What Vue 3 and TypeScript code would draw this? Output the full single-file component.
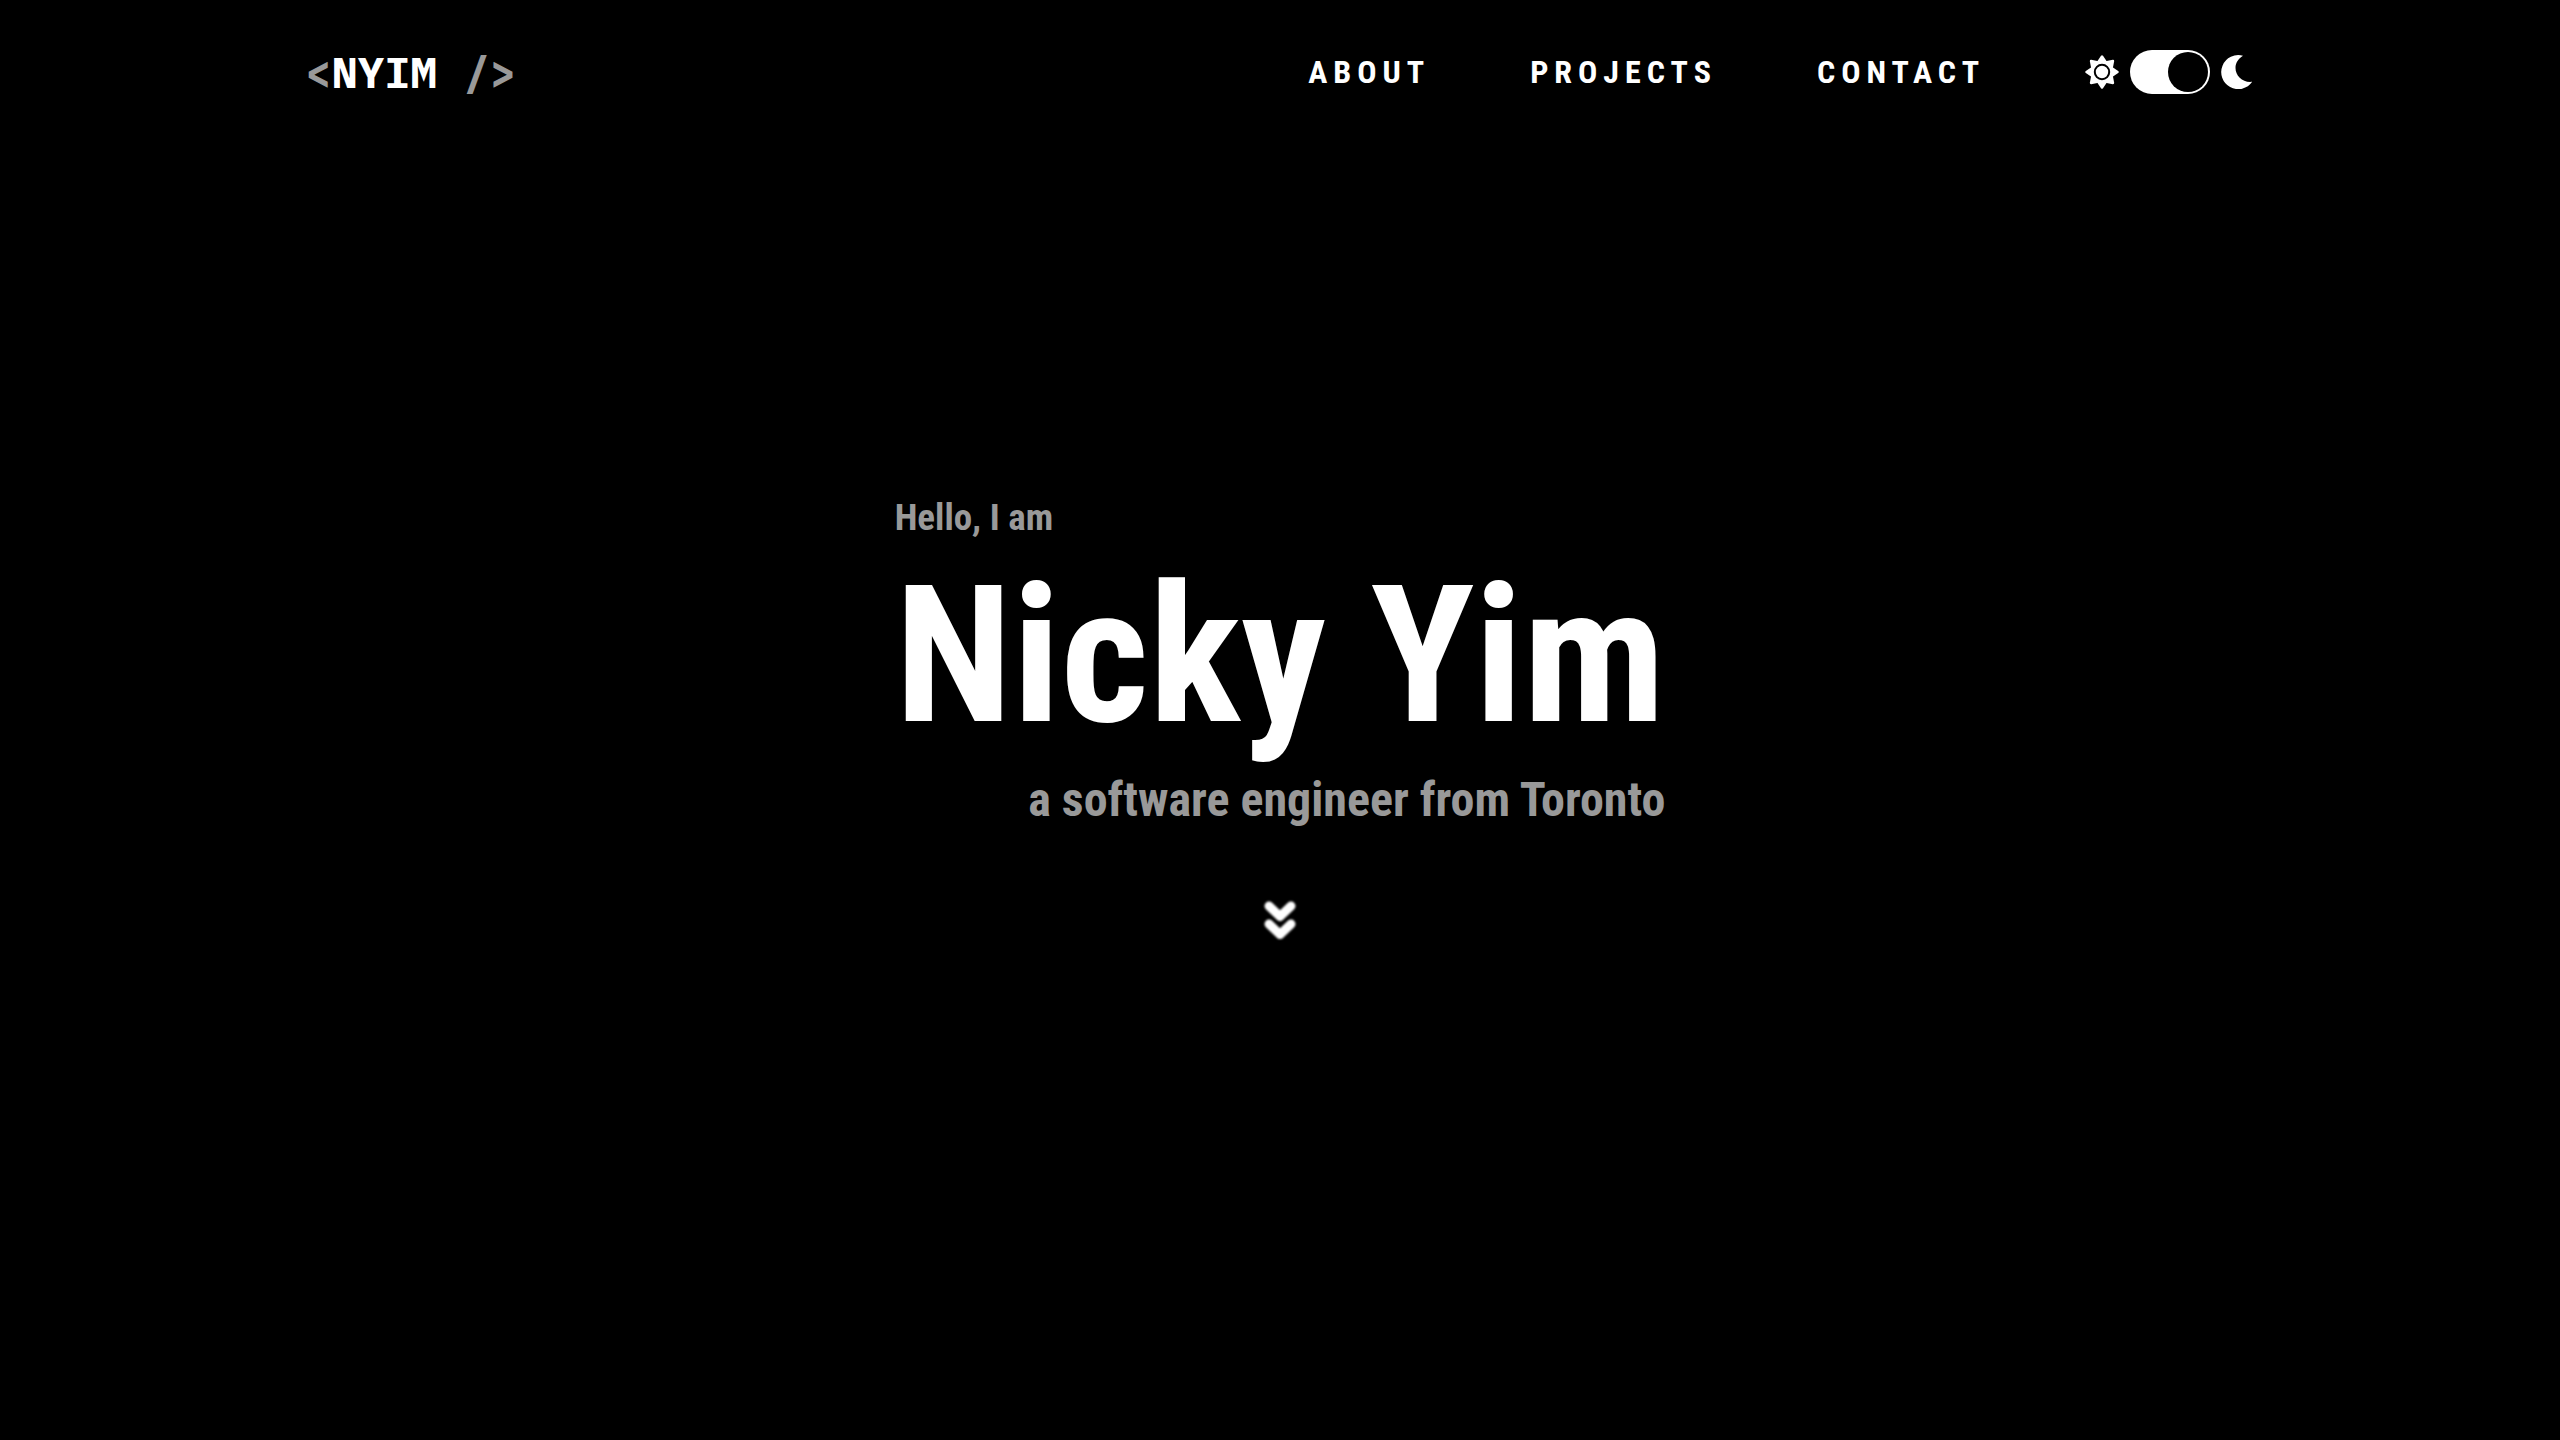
<script setup lang="ts">
import { ref } from 'vue'

interface NavLink {
  label: string
  href: string
}

const links: NavLink[] = [
  { label: 'ABOUT', href: '#about' },
  { label: 'PROJECTS', href: '#projects' },
  { label: 'CONTACT', href: '#contact' },
]

const dark = ref(true)
const rays = [0, 45, 90, 135, 180, 225, 270, 315]
</script>

<template>
  <div class="page" :class="{ light: !dark }">
    <header class="header">
      <a class="logo" href="#home"><span class="muted">&lt;</span>NYIM <span class="muted">/&gt;</span></a>
      <nav class="nav">
        <a v-for="link in links" :key="link.href" class="nav-link" :href="link.href">{{ link.label }}</a>
        <label class="theme">
          <svg class="icon" viewBox="0 0 34 34" aria-hidden="true">
            <path
              v-for="angle in rays"
              :key="angle"
              d="M10.5 9 L16 0.8 Q17 -0.4 18 0.8 L23.5 9 L17 17Z"
              :transform="`rotate(${angle} 17 17)`"
            />
            <circle class="ring" cx="17" cy="17" r="7.2" />
          </svg>
          <input v-model="dark" class="switch" type="checkbox" role="switch" aria-label="Dark theme" />
          <svg class="icon" viewBox="0 0 34 34" aria-hidden="true">
            <path d="M22 0.8 A17 17 0 1 0 31.2 26.8 C22 28 14.5 21 14.5 13 C14.5 8 17 4 22 0.8Z" />
          </svg>
        </label>
      </nav>
    </header>
    <main class="hero">
      <div class="intro">
        <p class="greeting">Hello, I am</p>
        <h1 class="name">Nicky Yim</h1>
        <p class="role">a software engineer from Toronto</p>
      </div>
      <a class="scroll" href="#about" aria-label="Scroll to about">
        <svg class="chevrons" viewBox="0 0 32 38" aria-hidden="true">
          <path d="M5 4 L16 14.5 L27 4 M5 22 L16 32.5 L27 22" />
        </svg>
      </a>
    </main>
  </div>
</template>

<style>
body {
  margin: 0;
  background: #000;
}
</style>

<style scoped>
.page {
  --fg: #fff;
  --bg: #000;
  --muted: #999;
  display: flex;
  flex-direction: column;
  min-height: 100vh;
  box-sizing: border-box;
  background: var(--bg);
  color: var(--fg);
  font-family: 'Roboto Condensed', Roboto, sans-serif;
  font-weight: 700;
}

.page.light {
  --fg: #000;
  --bg: #fff;
}

.header {
  display: flex;
  align-items: center;
  justify-content: space-between;
  box-sizing: border-box;
  width: 100%;
  max-width: 1950px;
  height: 144px;
  margin: 0 auto;
}

.logo {
  color: var(--fg);
  font-family: 'IBM Plex Mono', 'Noto Sans Mono', monospace;
  font-size: 44px;
  line-height: 56px;
  text-decoration: none;
  white-space: pre;
}

.muted {
  color: var(--muted);
}

.nav {
  display: flex;
  align-items: center;
  gap: 100px;
}

.nav-link {
  color: var(--fg);
  font-size: 32px;
  line-height: 40px;
  letter-spacing: 6px;
  text-decoration: none;
}

.theme {
  display: flex;
  align-items: center;
  gap: 11px;
}

.icon {
  width: 34px;
  height: 34px;
  fill: var(--fg);
}

.ring {
  stroke: var(--bg);
  stroke-width: 2;
}

.switch {
  appearance: none;
  box-sizing: border-box;
  display: flex;
  justify-content: flex-start;
  width: 80px;
  height: 44px;
  margin: 0;
  padding: 2px;
  border-radius: 22px;
  background: var(--fg);
  cursor: pointer;
}

.switch::before {
  content: '';
  width: 40px;
  height: 40px;
  border-radius: 50%;
  background: var(--bg);
}

.switch:checked {
  justify-content: flex-end;
}

.hero {
  flex: 1;
  display: flex;
  flex-direction: column;
  align-items: center;
  justify-content: center;
  padding-bottom: 150px;
}

.greeting,
.name,
.role {
  margin: 0;
}

.greeting {
  color: var(--muted);
  font-size: 37px;
  line-height: 48px;
}

.name {
  margin: 2px 0 4px;
  font-size: 192px;
  line-height: 224px;
}

.role {
  color: var(--muted);
  font-size: 48px;
  line-height: 56px;
  text-align: right;
}

.scroll {
  display: flex;
  margin-top: 74px;
}

.chevrons {
  width: 32px;
  height: 38px;
  overflow: visible;
  fill: none;
  stroke: var(--fg);
  stroke-width: 9;
  stroke-linecap: round;
  stroke-linejoin: round;
  filter: blur(1px);
}
</style>
